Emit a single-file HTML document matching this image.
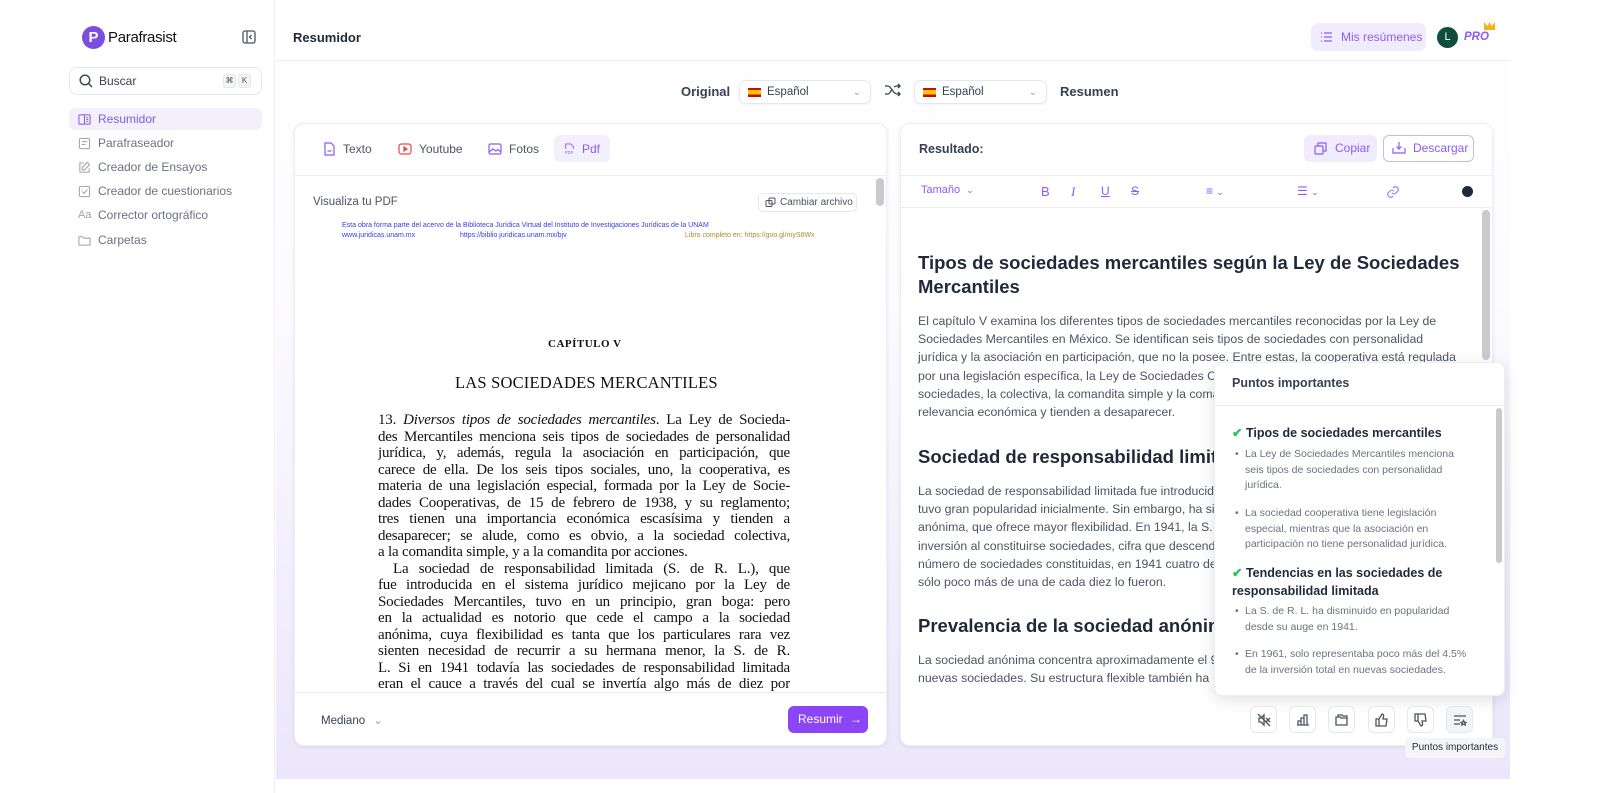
<!DOCTYPE html>
<html><head><meta charset="utf-8"><style>
*{box-sizing:border-box;margin:0;padding:0}
body{width:1600px;height:793px;overflow:hidden;background:#fff;font-family:"Liberation Sans",sans-serif;position:relative;color:#374151}
.abs{position:absolute}
.side{left:0;top:0;width:275px;height:793px;border-right:1px solid #eeeef2;background:#fff}
.nav{position:absolute;left:69px;width:193px;height:22px;font-size:12px;color:#6b7280;display:flex;align-items:center;padding-left:9px;gap:7px}
.nav svg{width:13px;height:13px}
.main{left:276px;top:0;width:1234px;height:779px;background:linear-gradient(#fff 0,#fcfbff 300px,#ebe6fb 100%)}
.card{background:#fff;border-radius:10px;box-shadow:0 1px 4px rgba(0,0,0,.08);border:1px solid #efeff3}
.tab{position:absolute;top:135px;height:27px;font-size:12px;color:#4b5563;display:flex;align-items:center;gap:7px;padding:0 10px;border-radius:6px}
.sel{position:absolute;top:80px;height:24px;border:1px solid #e5e7eb;border-radius:7px;background:#fff;font-size:11.5px;color:#374151;display:flex;align-items:center;padding-left:8px;gap:6px;box-shadow:0 1px 2px rgba(0,0,0,.05)}
.flag{width:13px;height:9px;background:linear-gradient(#c60b1e 25%,#ffc400 25%,#ffc400 75%,#c60b1e 75%)}
.pdf{font-family:"Liberation Serif",serif;font-size:15px;color:#111;position:absolute;left:378px;width:412px;text-align:justify;text-align-last:justify;white-space:nowrap;line-height:16px;letter-spacing:-0.2px;overflow:hidden}
.rt{position:absolute;left:918px;font-size:12.3px;color:#4b5563;white-space:nowrap}
.rh{position:absolute;left:918px;font-size:18.5px;font-weight:bold;color:#1f2937;white-space:nowrap}
.ib{position:absolute;top:706px;width:27px;height:27px;border:1px solid #e5e7eb;border-radius:6px;background:#fff;display:flex;align-items:center;justify-content:center}
.ib svg{width:14px;height:14px;fill:none;stroke:#4b5563;stroke-width:1.3}
.pt{position:absolute;left:1232px;font-size:12.5px;font-weight:bold;color:#1f2937;white-space:nowrap}
.pb{position:absolute;left:1245px;font-size:10.5px;color:#6b7280;line-height:15.5px;white-space:nowrap}
.pb:before{content:"•";position:absolute;left:-10px}
.tb{position:absolute;top:184px;font-size:12px;color:#8b5cf6}
</style></head><body>
<div class="abs side"></div>
<div class="abs" style="left:82px;top:26px;width:23px;height:23px;border-radius:50%;background:#7c4ddf;color:#fff;font-weight:bold;font-size:15px;text-align:center;line-height:23px">P</div>
<div class="abs" style="left:108px;top:29px;font-size:15px;color:#111;letter-spacing:-.3px">Parafrasist</div>
<svg class="abs" style="left:242px;top:30px" width="14" height="14" viewBox="0 0 14 14" fill="none" stroke="#4b5563" stroke-width="1.3"><rect x="1" y="1" width="12" height="12" rx="2"/><path d="M5 1v12M9.5 5L7.5 7l2 2"/></svg>
<div class="abs" style="left:69px;top:67px;width:193px;height:28px;border:1px solid #e5e7eb;border-radius:8px"></div>
<svg class="abs" style="left:79px;top:74px" width="14" height="14" viewBox="0 0 14 14" fill="none" stroke="#374151" stroke-width="1.4"><circle cx="6" cy="6" r="4.8"/><path d="M9.5 9.5L13 13"/></svg>
<div class="abs" style="left:99px;top:74px;font-size:12px;color:#374151">Buscar</div>
<div class="abs" style="left:223px;top:74px;width:13px;height:14px;background:#f3f4f6;border:1px solid #e5e7eb;border-radius:3px;font-size:8px;text-align:center;line-height:12px;color:#555">⌘</div>
<div class="abs" style="left:238px;top:74px;width:13px;height:14px;background:#f3f4f6;border:1px solid #e5e7eb;border-radius:3px;font-size:8px;text-align:center;line-height:12px;color:#555">K</div>
<div class="nav" style="top:108px;background:#f3f0fc;border-radius:6px;color:#7c5ce0"><svg viewBox="0 0 14 14" fill="none" stroke="#7c5ce0" stroke-width="1.1"><rect x="1" y="2" width="12" height="10" rx="1"/><path d="M7 2v10M9 5h2M9 7h2M9 9h2"/></svg>Resumidor</div>
<div class="nav" style="top:132px"><svg viewBox="0 0 14 14" fill="none" stroke="#9ca3af" stroke-width="1.1"><rect x="1.5" y="1.5" width="11" height="11" rx="1.5"/><path d="M4 5h6M4 8h4"/></svg>Parafraseador</div>
<div class="nav" style="top:156px"><svg viewBox="0 0 14 14" fill="none" stroke="#9ca3af" stroke-width="1.1"><path d="M12 8v4H2V2h4M10 1.5l2.5 2.5L7 9.5H4.5V7z"/></svg>Creador de Ensayos</div>
<div class="nav" style="top:180px"><svg viewBox="0 0 14 14" fill="none" stroke="#9ca3af" stroke-width="1.1"><rect x="1.5" y="1.5" width="11" height="11" rx="1.5"/><path d="M4.5 7l2 2 3.5-4"/></svg>Creador de cuestionarios</div>
<div class="nav" style="top:204px"><span style="font-size:11px;color:#9ca3af;width:13px">Aa</span>Corrector ortográfico</div>
<div class="nav" style="top:229px"><svg viewBox="0 0 14 14" fill="none" stroke="#9ca3af" stroke-width="1.1"><path d="M1 3h4l1.5 1.5H13V12H1z"/></svg>Carpetas</div>

<div class="abs main"></div>
<div class="abs" style="left:276px;top:0;width:1234px;height:61px;background:#fff;border-bottom:1px solid #ededf1"></div>
<div class="abs" style="left:293px;top:30px;font-size:13px;font-weight:bold;color:#1f2937">Resumidor</div>
<div class="abs" style="left:1311px;top:23px;width:115px;height:28px;background:#f1ecfd;border-radius:7px;font-size:12px;color:#8b5cf6;line-height:28px;padding-left:30px;white-space:nowrap">Mis resúmenes</div>
<svg class="abs" style="left:1320px;top:31px" width="13" height="12" viewBox="0 0 13 12" fill="none" stroke="#8b5cf6" stroke-width="1.2"><path d="M1 2h1M1 6h1M1 10h1M4 2h8M4 6h8M4 10h8"/></svg>
<div class="abs" style="left:1437px;top:27px;width:21px;height:21px;border-radius:50%;background:#0d4f3c;color:#fff;font-size:11px;text-align:center;line-height:21px">L</div>
<div class="abs" style="left:1464px;top:31px;font-size:11.5px;font-weight:bold;font-style:italic;color:#8b5cf6">PRO</div>
<div class="abs" style="left:1484px;top:22px;width:11px;height:8px;background:#f0b323;clip-path:polygon(0 0,30% 50%,50% 0,70% 50%,100% 0,100% 100%,0 100%)"></div>

<div class="abs" style="left:681px;top:84px;font-size:13px;font-weight:bold;color:#374151">Original</div>
<div class="sel" style="left:739px;width:132px"><div class="flag"></div>Español<span style="position:absolute;right:9px;color:#9ca3af;font-size:10px">⌄</span></div>
<svg class="abs" style="left:884px;top:83px" width="17" height="14" viewBox="0 0 17 14" fill="none" stroke="#374151" stroke-width="1.3"><path d="M1 3h3c3 0 5 8 9 8h3M1 11h3c1.5 0 2.5-2 3.5-4M10 4c1-.8 2-1 3-1h3M14 1l2 2-2 2M14 9l2 2-2 2"/></svg>
<div class="sel" style="left:914px;width:133px"><div class="flag"></div>Español<span style="position:absolute;right:9px;color:#9ca3af;font-size:10px">⌄</span></div>
<div class="abs" style="left:1060px;top:84px;font-size:13px;font-weight:bold;color:#374151">Resumen</div>

<!-- left card -->
<div class="abs card" style="left:294px;top:123px;width:593px;height:623px"></div>
<div class="abs" style="left:294px;top:175px;width:593px;height:1px;background:#ececf0"></div>
<div class="tab" style="left:313px"><svg width="13" height="14" viewBox="0 0 13 14" fill="none" stroke="#8b5cf6" stroke-width="1.2"><path d="M2 1h6l3 3v9H2z"/><path d="M4.5 9h4"/></svg>Texto</div>
<div class="tab" style="left:388px"><svg width="14" height="12" viewBox="0 0 14 12" fill="none" stroke="#ef4444" stroke-width="1.2"><rect x="1" y="1" width="12" height="10" rx="2.5"/><path d="M6 4v4l3-2z" fill="#ef4444"/></svg>Youtube</div>
<div class="tab" style="left:478px"><svg width="14" height="12" viewBox="0 0 14 12" fill="none" stroke="#8b5cf6" stroke-width="1.2"><rect x="1" y="1" width="12" height="10" rx="1.5"/><path d="M1 9l4-3 3 2 2-1.5 3 2.5"/></svg>Fotos</div>
<div class="tab" style="left:554px;width:56px;background:#f3effd;color:#8b5cf6"><svg width="13" height="14" viewBox="0 0 13 14" fill="none" stroke="#8b5cf6" stroke-width="1.1"><path d="M2 7V1h6l3 3v3"/><text x="1" y="13" font-size="5" fill="#8b5cf6" stroke="none" font-family="Liberation Sans">PDF</text></svg>Pdf</div>
<div class="abs" style="left:876px;top:178px;width:8px;height:28px;background:#c9c9cf;border-radius:4px"></div>
<div class="abs" style="left:313px;top:196px;font-size:11.5px;color:#4b5563">Visualiza tu PDF</div>
<div class="abs" style="left:758px;top:193px;width:99px;height:19px;border:1px solid #e5e7eb;border-radius:5px;font-size:10px;color:#4b5563;line-height:17px;padding-left:21px">Cambiar archivo</div>
<svg class="abs" style="left:765px;top:197px" width="11" height="11" viewBox="0 0 11 11" fill="none" stroke="#4b5563" stroke-width="1"><rect x="1" y="3.5" width="6" height="6" rx="1"/><rect x="4" y="1" width="6" height="6" rx="1"/></svg>
<div class="abs" style="left:342px;top:222px;font-size:7px;color:#3b3be0;white-space:nowrap">Esta obra forma parte del acervo de la Biblioteca Jurídica Virtual del Instituto de Investigaciones Jurídicas de la UNAM</div>
<div class="abs" style="left:342px;top:232px;font-size:7px;color:#3b3be0">www.juridicas.unam.mx</div>
<div class="abs" style="left:460px;top:232px;font-size:7px;color:#3b3be0">https://biblio.juridicas.unam.mx/bjv</div>
<div class="abs" style="left:685px;top:232px;font-size:7px;color:#b08a2a">Libro completo en: https://goo.gl/myS8Wx</div>
<div class="abs" style="left:548px;top:338px;font-family:'Liberation Serif',serif;font-size:11px;font-weight:bold;letter-spacing:.5px;color:#111">CAPÍTULO V</div>
<div class="abs" style="left:455px;top:373px;font-family:'Liberation Serif',serif;font-size:16.5px;color:#111;letter-spacing:.2px">LAS SOCIEDADES MERCANTILES</div>
<div class="pdf" style="top:412px">13. <i>Diversos tipos de sociedades mercantiles</i>. La Ley de Socieda-</div>
<div class="pdf" style="top:428.5px">des Mercantiles menciona seis tipos de sociedades de personalidad</div>
<div class="pdf" style="top:445px">jurídica, y, además, regula la asociación en participación, que</div>
<div class="pdf" style="top:461.5px">carece de ella. De los seis tipos sociales, uno, la cooperativa, es</div>
<div class="pdf" style="top:478px">materia de una legislación especial, formada por la Ley de Socie-</div>
<div class="pdf" style="top:494.5px">dades Cooperativas, de 15 de febrero de 1938, y su reglamento;</div>
<div class="pdf" style="top:511px">tres tienen una importancia económica escasísima y tienden a</div>
<div class="pdf" style="top:527.5px">desaparecer; se alude, como es obvio, a la sociedad colectiva,</div>
<div class="pdf" style="top:544px;text-align-last:left">a la comandita simple, y a la comandita por acciones.</div>
<div class="pdf" style="top:560.5px;left:393px;width:397px">La sociedad de responsabilidad limitada (S. de R. L.), que</div>
<div class="pdf" style="top:577px">fue introducida en el sistema jurídico mejicano por la Ley de</div>
<div class="pdf" style="top:593.5px">Sociedades Mercantiles, tuvo en un principio, gran boga: pero</div>
<div class="pdf" style="top:610px">en la actualidad es notorio que cede el campo a la sociedad</div>
<div class="pdf" style="top:626.5px">anónima, cuya flexibilidad es tanta que los particulares rara vez</div>
<div class="pdf" style="top:643px">sienten necesidad de recurrir a su hermana menor, la S. de R.</div>
<div class="pdf" style="top:659.5px">L. Si en 1941 todavía las sociedades de responsabilidad limitada</div>
<div class="pdf" style="top:676px">eran el cauce a través del cual se invertía algo más de diez por</div>
<div class="abs" style="left:295px;top:692px;width:591px;height:53px;background:#fff;border-top:1px solid #ececf0;border-radius:0 0 10px 10px"></div>
<div class="abs" style="left:321px;top:713px;font-size:11.5px;color:#374151">Mediano <span style="color:#9ca3af;margin-left:5px">⌄</span></div>
<div class="abs" style="left:788px;top:706px;width:80px;height:27px;background:#8b45f5;border-radius:6px;color:#fff;font-size:12px;line-height:27px;padding-left:10px">Resumir <span style="margin-left:4px">→</span></div>

<!-- right card -->
<div class="abs card" style="left:900px;top:123px;width:593px;height:623px"></div>
<div class="abs" style="left:919px;top:142px;font-size:12.5px;font-weight:bold;color:#374151">Resultado:</div>
<div class="abs" style="left:1304px;top:135px;width:73px;height:27px;background:#f1ecfd;border-radius:6px;font-size:12px;color:#8b5cf6;line-height:27px;padding-left:31px">Copiar</div>
<svg class="abs" style="left:1314px;top:142px" width="13" height="13" viewBox="0 0 13 13" fill="none" stroke="#8b5cf6" stroke-width="1.2"><rect x="1" y="4" width="8" height="8" rx="1"/><path d="M4 4V1h8v8H9"/></svg>
<div class="abs" style="left:1383px;top:135px;width:91px;height:27px;border:1px solid #c9b8f5;border-radius:6px;font-size:12px;color:#8b5cf6;line-height:25px;padding-left:29px">Descargar</div>
<svg class="abs" style="left:1392px;top:141px" width="14" height="13" viewBox="0 0 14 13" fill="none" stroke="#8b5cf6" stroke-width="1.2"><path d="M1 7v5h12V7M7 1v7M4.5 5.5L7 8l2.5-2.5"/></svg>
<div class="abs" style="left:900px;top:175px;width:593px;height:1px;background:#ececf0"></div>
<div class="abs" style="left:900px;top:207px;width:593px;height:1px;background:#ececf0"></div>
<div class="tb" style="left:921px;font-size:11px">Tamaño <span style="font-size:9px;margin-left:3px">⌄</span></div>
<div class="tb" style="left:1041px;font-size:13px">B</div>
<div class="tb" style="left:1071px;font-size:13px;font-style:italic;font-family:'Liberation Serif',serif">I</div>
<div class="tb" style="left:1101px;font-size:12px;text-decoration:underline">U</div>
<div class="tb" style="left:1131px;font-size:12px;text-decoration:line-through">S</div>
<div class="tb" style="left:1206px;font-size:12px">≡ <span style="font-size:9px">⌄</span></div>
<div class="tb" style="left:1297px;font-size:12px">☰ <span style="font-size:9px">⌄</span></div>
<svg class="abs" style="left:1386px;top:185px" width="14" height="14" viewBox="0 0 14 14" fill="none" stroke="#a78bfa" stroke-width="1.3"><path d="M6 8a3 3 0 0 0 4 0l2-2a3 3 0 0 0-4-4L7 3M8 6a3 3 0 0 0-4 0L2 8a3 3 0 0 0 4 4l1-1"/></svg>
<div class="abs" style="left:1462px;top:186px;width:11px;height:11px;border-radius:50%;background:#1f2937"></div>
<div class="abs" style="left:1482px;top:210px;width:8px;height:150px;background:#c9c9cf;border-radius:4px"></div>

<div class="rh" style="top:252px">Tipos de sociedades mercantiles según la Ley de Sociedades</div>
<div class="rh" style="top:276px">Mercantiles</div>
<div class="rt" style="top:314px">El capítulo V examina los diferentes tipos de sociedades mercantiles reconocidas por la Ley de</div>
<div class="rt" style="top:332px">Sociedades Mercantiles en México. Se identifican seis tipos de sociedades con personalidad</div>
<div class="rt" style="top:350px">jurídica y la asociación en participación, que no la posee. Entre estas, la cooperativa está regulada</div>
<div class="rt" style="top:369px">por una legislación específica, la Ley de Sociedades Cooperativas, mientras que tres</div>
<div class="rt" style="top:387px">sociedades, la colectiva, la comandita simple y la comandita por acciones</div>
<div class="rt" style="top:405px">relevancia económica y tienden a desaparecer.</div>
<div class="rh" style="top:446px">Sociedad de responsabilidad limitada</div>
<div class="rt" style="top:484px">La sociedad de responsabilidad limitada fue introducida por la Ley</div>
<div class="rt" style="top:502px">tuvo gran popularidad inicialmente. Sin embargo, ha sido desplazada</div>
<div class="rt" style="top:520px">anónima, que ofrece mayor flexibilidad. En 1941, la S. de R. L.</div>
<div class="rt" style="top:539px">inversión al constituirse sociedades, cifra que descendió</div>
<div class="rt" style="top:557px">número de sociedades constituidas, en 1941 cuatro de</div>
<div class="rt" style="top:575px">sólo poco más de una de cada diez lo fueron.</div>
<div class="rh" style="top:615px">Prevalencia de la sociedad anónima</div>
<div class="rt" style="top:653px">La sociedad anónima concentra aproximadamente el 90% de</div>
<div class="rt" style="top:671px">nuevas sociedades. Su estructura flexible también ha</div>

<!-- popup -->
<div class="abs" style="left:1214px;top:362px;width:291px;height:334px;background:#fff;border-radius:8px;box-shadow:0 4px 16px rgba(0,0,0,.12);border:1px solid #eee"></div>
<div class="abs" style="left:1232px;top:376px;font-size:12.5px;font-weight:bold;color:#374151">Puntos importantes</div>
<div class="abs" style="left:1215px;top:405px;width:289px;height:1px;background:#ececf0"></div>
<div class="abs" style="left:1496px;top:408px;width:6px;height:155px;background:#c9c9cf;border-radius:3px"></div>
<div class="pt" style="top:425px"><span style="color:#22c55e">✔</span> Tipos de sociedades mercantiles</div>
<div class="pb" style="top:447px">La Ley de Sociedades Mercantiles menciona<br>seis tipos de sociedades con personalidad<br>jurídica.</div>
<div class="pb" style="top:506px">La sociedad cooperativa tiene legislación<br>especial, mientras que la asociación en<br>participación no tiene personalidad jurídica.</div>
<div class="pt" style="top:564px;line-height:18px"><span style="color:#22c55e">✔</span> Tendencias en las sociedades de<br>responsabilidad limitada</div>
<div class="pb" style="top:604px">La S. de R. L. ha disminuido en popularidad<br>desde su auge en 1941.</div>
<div class="pb" style="top:647px">En 1961, solo representaba poco más del 4.5%<br>de la inversión total en nuevas sociedades.</div>

<div class="ib" style="left:1250px"><svg viewBox="0 0 14 14"><path d="M2 5h2l3-3v10l-3-3H2zM9 5l4 4M13 5l-4 4M1 1l12 12"/></svg></div>
<div class="ib" style="left:1289px"><svg viewBox="0 0 14 14"><path d="M2 12V8h3v4M5 12V5h3v7M8 12V2h3v10M1 12h12"/></svg></div>
<div class="ib" style="left:1328px"><svg viewBox="0 0 14 14"><path d="M1 4h4l1 1h6v7H1zM3 4V2h4l1 1h4v2"/></svg></div>
<div class="ib" style="left:1368px"><svg viewBox="0 0 14 14"><path d="M1 6h3v7H1zM4 6l3-5c1 0 2 1 1.5 2.5L8 6h4l-1 7H4"/></svg></div>
<div class="ib" style="left:1407px"><svg viewBox="0 0 14 14"><path d="M1 1h3v7H1zM4 8l3 5c1 0 2-1 1.5-2.5L8 8h4l-1-7H4"/></svg></div>
<div class="ib" style="left:1446px;background:#f3f4f6"><svg viewBox="0 0 14 14"><path d="M1 3h12M1 7h6M1 11h6M10.5 7.5l1 1.8 1.5.2-1.2 1 .4 1.5-1.7-.9-1.7.9.4-1.5-1.2-1 1.5-.2z"/></svg></div>
<div class="abs" style="left:1405px;top:738px;width:100px;height:20px;background:#f5f5f7;border-radius:4px;font-size:10px;color:#1f2937;line-height:20px;text-align:center">Puntos importantes</div>
</body></html>
